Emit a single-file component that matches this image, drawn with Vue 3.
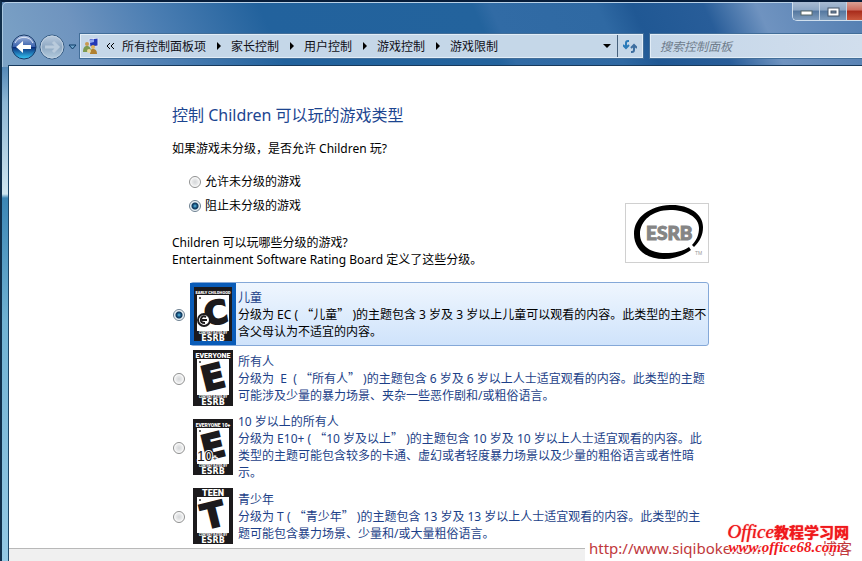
<script setup>
import { ref } from "vue";

const crumbs = ["所有控制面板项", "家长控制", "用户控制", "游戏控制", "游戏限制"];
const unrated = ref("block");
const rating = ref("EC");
const search = ref("");

const ratings = [
  {
    id: "EC",
    head: "EARLY CHILDHOOD",
    size: 4,
    letter: "C",
    name: "儿童",
    lines: [
      "分级为 EC ( “儿童” )的主题包含 3 岁及 3 岁以上儿童可以观看的内容。此类型的主题不",
      "含父母认为不适宜的内容。",
    ],
  },
  {
    id: "E",
    head: "EVERYONE",
    size: 7,
    letter: "E",
    name: "所有人",
    lines: [
      "分级为  E  ( “所有人” )的主题包含 6 岁及 6 岁以上人士适宜观看的内容。此类型的主题",
      "可能涉及少量的暴力场景、夹杂一些恶作剧和/或粗俗语言。",
    ],
  },
  {
    id: "E10",
    head: "EVERYONE 10+",
    size: 5,
    letter: "E",
    name: "10 岁以上的所有人",
    lines: [
      "分级为 E10+ ( “10 岁及以上” )的主题包含 10 岁及 10 岁以上人士适宜观看的内容。此",
      "类型的主题可能包含较多的卡通、虚幻或者轻度暴力场景以及少量的粗俗语言或者性暗",
      "示。",
    ],
  },
  {
    id: "T",
    head: "TEEN",
    size: 9,
    letter: "T",
    name: "青少年",
    lines: [
      "分级为 T ( “青少年” )的主题包含 13 岁及 13 岁以上人士适宜观看的内容。此类型的主",
      "题可能包含暴力场景、少量和/或大量粗俗语言。",
    ],
  },
];

// curly quotes are set full width, so they get their own pieces
const pieces = (line) => line.split(/([“”])/);
const isQuote = (piece) => piece === "“" || piece === "”";
</script>

<template>
  <div class="window">
    <div class="titlebar">
      <div class="winButtons">
        <button aria-label="最小化">
          <svg width="13" height="8"><rect x="1" y="3" width="11" height="4" fill="#fff" stroke="#566" /></svg>
        </button>
        <button aria-label="最大化">
          <svg width="13" height="10">
            <rect x="1" y="1" width="11" height="8" fill="#fff" stroke="#455468" />
            <rect x="4" y="4" width="5" height="2" fill="#7188a5" stroke="#455468" />
          </svg>
        </button>
        <button class="close" aria-label="关闭"></button>
      </div>
    </div>

    <div class="nav">
      <div class="travel">
        <button aria-label="后退">
          <svg width="26" height="26" viewBox="0 0 26 26">
            <defs>
              <linearGradient id="back" x2="0" y2="1">
                <stop offset="0" stop-color="#a9bce0" />
                <stop offset=".48" stop-color="#3b62ad" />
                <stop offset=".52" stop-color="#0b2f7c" />
                <stop offset="1" stop-color="#37c8f5" />
              </linearGradient>
            </defs>
            <circle cx="13" cy="13" r="12" fill="url(#back)" stroke="#173b69" />
            <path d="M4 9a10 10 0 0 1 18 0" fill="none" stroke="#dce6f5" />
            <path d="M5 13l7-6v4h8v4h-8v4z" fill="#fff" />
          </svg>
        </button>
        <button aria-label="前进">
          <svg width="26" height="26" viewBox="0 0 26 26">
            <defs>
              <linearGradient id="forward" x2="0" y2="1">
                <stop offset="0" stop-color="#bccde0" />
                <stop offset=".5" stop-color="#8ea8c2" />
                <stop offset="1" stop-color="#b5cddf" />
              </linearGradient>
            </defs>
            <circle cx="13" cy="13" r="12" fill="url(#forward)" stroke="#365c84" />
            <circle cx="13" cy="13" r="11" fill="none" stroke="#c2d2e2" />
            <path d="M6 13h13M14 8l5 5-5 5" fill="none" stroke="#b9cbdc" stroke-width="3" />
          </svg>
        </button>
        <button class="recent" aria-label="最近浏览的页面">
          <svg width="9" height="6"><path d="M1 1h7L4.500 5z" fill="#6ea3cb" stroke="#0d3c68" /></svg>
        </button>
      </div>

      <div class="address">
        <svg class="family" width="16" height="16" viewBox="0 0 16 16">
          <path d="M6 1l9-1v8l-8 1z" fill="#2338b5" stroke="#dfe6f5" />
          <path d="M7 2l4-1v3l-4 1z" fill="#8fa6f0" />
          <circle cx="4" cy="6" r="2" fill="#c99a4e" />
          <path d="M0 14c0-5 2-6 4-6s4 1 4 6z" fill="#7d9a50" />
          <circle cx="10" cy="9" r="2" fill="#e0b45c" />
          <path d="M7 16c0-4 1-5 3-5s4 1 4 5z" fill="#b08030" />
          <circle cx="6" cy="13" r="2" fill="#e8d9a0" />
        </svg>
        <svg class="more" width="8" height="7"><path d="M4 0L1 3l3 3M8 0L5 3l3 3" fill="none" stroke="#000" /></svg>
        <template v-for="(crumb, i) in crumbs" :key="crumb">
          <svg v-if="i > 0" class="arrow" width="25" height="8"><path d="M11 0v8l4-4z" /></svg>
          <a href="#">{{ crumb }}</a>
        </template>
        <button class="drop" aria-label="以前的位置">
          <svg width="8" height="4"><path d="M0 0h8L4 4z" /></svg>
        </button>
        <button class="refresh" aria-label="刷新">
          <svg width="14" height="13" viewBox="0 0 14 13">
            <path d="M6 1H5q-2 0-2 2v4M0 5l3 3 3-3" fill="none" stroke="#2b7bb9" stroke-width="2" />
            <path d="M8 12h1q2 0 2-2V6M8 8l3-3 3 3" fill="none" stroke="#3f6fa0" stroke-width="2" />
          </svg>
        </button>
      </div>

      <input v-model="search" class="search" placeholder="搜索控制面板" aria-label="搜索控制面板" />
    </div>

    <div class="client">
      <div class="content">
        <div class="intro">
          <div>
            <h1>控制 Children 可以玩的游戏类型</h1>
            <p>如果游戏未分级，是否允许 Children 玩?</p>
            <div class="choices">
              <label><input v-model="unrated" type="radio" value="allow" name="unrated" />允许未分级的游戏</label>
              <label><input v-model="unrated" type="radio" value="block" name="unrated" />阻止未分级的游戏</label>
            </div>
            <p>
              Children 可以玩哪些分级的游戏?<br />
              Entertainment Software Rating Board 定义了这些分级。
            </p>
          </div>
          <svg class="esrb" width="84" height="60" viewBox="0 0 84 60">
            <path
              fill-rule="evenodd"
              d="M45 2C62 1 78 10 78 24C78 32 75 38 69 44L67 42C72 37 74 31 74 25C74 14 61 7 45 7C27 7 15 18 15 31C15 43 26 50 40 50C50 50 58 48 64 44L66 47C59 52 50 56 39 56C22 56 9 47 9 31C9 14 25 3 45 2Z"
            />
            <text x="21" y="37" class="logoText">ESRB</text>
            <text x="70" y="52" class="tm">TM</text>
          </svg>
        </div>

        <label v-for="r in ratings" :key="r.id" class="rating" :class="{ selected: rating === r.id }">
          <input v-model="rating" type="radio" :value="r.id" name="rating" />
          <div class="card">
            <svg class="badge" width="40" height="56" viewBox="0 0 40 56">
              <rect width="40" height="56" fill="#1c1a1c" />
              <rect x="4" y="9" width="32" height="36" fill="#fff" />
              <text x="20" y="8" class="badgeText" :font-size="r.size">{{ r.head }}</text>
              <circle cx="7" cy="12" r="1" fill="#333" />
              <g v-if="r.id === 'EC'">
                <text x="23" y="38" class="letter" font-size="32" transform="rotate(-10 23 27)">C</text>
                <circle cx="11" cy="34" r="6" fill="#fff" stroke="#1c1a1c" stroke-width="2" />
                <path d="M13 31q-4-2-5 2t4 4M9 34h5" fill="none" stroke="#1c1a1c" stroke-width="2" />
              </g>
              <text v-else x="20" y="39" class="letter" font-size="34" transform="rotate(-14 20 27)">{{ r.letter }}</text>
              <text v-if="r.id === 'E10'" x="4" y="42" class="ten">10<tspan font-size="8">+</tspan></text>
              <text x="20" y="48" class="badgeText" font-size="3">CONTENT RATED BY</text>
              <text x="20" y="55" class="badgeText wide" font-size="8">ESRB</text>
            </svg>
            <div class="text">
              <div class="name">{{ r.name }}</div>
              <div v-for="line in r.lines" :key="line" class="line"><span v-for="(piece, i) in pieces(line)" :key="i" :class="{ quote: isQuote(piece) }">{{ piece }}</span></div>
            </div>
          </div>
        </label>
      </div>
      <div class="footer"></div>
    </div>

    <div class="mark">
      <div class="blog"><span>http://www.siqiboke.com</span><span>博客</span></div>
      <div class="site">Office<b>教程学习网</b></div>
      <div class="url">www.office68.com</div>
    </div>
  </div>
</template>

<style>
body {
  margin: 0;
}
</style>

<style scoped>
* {
  box-sizing: border-box;
}
.window {
  position: relative;
  display: flex;
  flex-direction: column;
  height: 100vh;
  overflow: hidden;
  padding-left: 7px;
  border-top: 2px solid #071d3a;
  border-left: 2px solid #102f4b;
  background: linear-gradient(#5d86b4 0, #4c82b3 60px, #8db6d4 100px, #cfe6f0 192px, #3c86b5 196px, #70b2d3 320px, #94c8e4 100%);
  font: 12px/17px "Noto Sans", "Noto Sans CJK SC", sans-serif;
}
.titlebar,
.nav {
  margin-left: -7px;
  padding-left: 7px;
}
.window::before {
  content: "";
  position: absolute;
  top: 0;
  left: 0;
  right: 0;
  height: 64px;
  border-top: 1px solid #b8d1e8;
  border-left: 1px solid #a9c8e0;
  border-radius: 5px 0 0 0;
  background: linear-gradient(65deg, #7ca3c6 0, #6f94bf 10%, #4a7db2 20%, #22629d 32%, #23639d 56%, #316ba5 58%, #2f69a3 70%, #205894 74%, #285d99 82%, #6f93c0 88%, #537eb1 100%);
}
.titlebar {
  position: relative;
  display: flex;
  justify-content: flex-end;
  height: 32px;
}
button {
  display: flex;
  align-items: center;
  justify-content: center;
  padding: 0;
  border: 0;
  background: none;
}
.winButtons {
  display: flex;
  height: 19px;
  border: 1px solid #d0dfed;
  border-top: 0;
  border-right: 0;
  border-radius: 0 0 0 5px;
  overflow: hidden;
}
.winButtons button {
  width: 27px;
  padding-top: 2px;
  border-right: 1px solid #c5d4e4;
  background: linear-gradient(#a9bcd3 0, #8ba5c3 45%, #54779f 50%, #7f9dbd 100%);
}
.winButtons .close {
  width: 15px;
  border: 0;
  background: linear-gradient(#d9a094 0, #cc6b5d 45%, #a82b1b 50%, #c9583d 100%);
}
.nav {
  position: relative;
  display: flex;
  align-items: flex-start;
  height: 31px;
}
.travel {
  display: flex;
  gap: 2px;
  padding: 0 2px;
  width: 71px;
}
.recent {
  width: 11px;
  height: 26px;
}
.address {
  display: flex;
  align-items: center;
  flex: 1;
  height: 24px;
  border: 1px solid #e2edf7;
  outline: 1px solid #426e99;
  background: #c5d7e8;
}
.family {
  margin: 0 7px 0 2px;
}
.more {
  margin-right: 8px;
}
.address a {
  color: #101018;
  text-decoration: none;
}
.drop {
  width: 20px;
  height: 22px;
  margin-left: auto;
}
.refresh {
  width: 25px;
  height: 22px;
  border-left: 1px solid #46617d;
}
.search {
  width: 212px;
  height: 24px;
  margin-left: 7px;
  padding: 0 9px;
  border: 1px solid #e2edf7;
  border-right: 0;
  border-radius: 0;
  outline: 1px solid #426e99;
  background: linear-gradient(90deg, #c4d6e8, #d1deed);
  font: italic 12px/17px "Noto Sans", "Noto Sans CJK SC", sans-serif;
}
.search::placeholder {
  color: #6f7d8c;
}
.client {
  position: relative;
  display: flex;
  flex-direction: column;
  flex: 1;
  border-top: 1px solid #17395c;
  border-left: 1px solid #1b4567;
  margin-left: -1px;
  background: #fff;
}
.content {
  max-width: 537px;
  margin-left: 163px;
}
.intro {
  display: flex;
  justify-content: space-between;
  height: 216px;
}
h1 {
  margin: 37px 0 0;
  color: #1c4590;
  font-size: 16px;
  font-weight: 400;
  line-height: 24px;
}
p {
  margin: 13px 0 0;
  color: #000;
}
.choices {
  margin: 12px 0 17px 17px;
}
.choices label {
  display: flex;
  align-items: center;
  gap: 4px;
  height: 24px;
}
input[type="radio"] {
  appearance: none;
  flex: none;
  width: 12px;
  height: 12px;
  margin: 2px 0 0;
  border: 1px solid #8e8f8f;
  border-radius: 50%;
  background: radial-gradient(circle, #d4d6d8 0, #e8e9ea 3px, #fff 5px);
}
input[type="radio"]:checked {
  border-color: #6c7f90;
  background: radial-gradient(circle at 50% 50%, #5dc0e6 0, #164f7c 2px, #12395c 3px, #dce8f0 4px, #fff 5px);
}
.esrb {
  flex: none;
  align-self: flex-end;
  margin-bottom: 19px;
  outline: 1px solid #d0d0d0;
  outline-offset: -1px;
}
.logoText {
  fill: #858585;
  stroke: #858585;
  font: 900 19px Lato, sans-serif;
}
.tm {
  fill: #999;
  font: 5px "Liberation Sans", sans-serif;
}
.rating {
  display: flex;
  align-items: center;
  gap: 5px;
  padding-left: 1px;
  color: #1c3f88;
}
.card {
  display: flex;
  align-items: center;
  flex: 1;
  min-height: 64px;
  padding: 2px 0;
  border: 1px solid transparent;
  border-radius: 3px;
}
.badge {
  flex: none;
  margin: 0 5px 0 2px;
}
.text {
  min-width: 0;
}
.line {
  white-space: pre;
}
.quote {
  font-family: "Noto Sans CJK SC", sans-serif;
  line-height: 1;
}
.selected .card {
  border-color: #84a8d8;
  background: linear-gradient(#eff6fe, #cfe3fb);
}
.selected .line {
  color: #000;
}
.selected .badge {
  outline: 4px solid #0a5cb8;
  outline-offset: -1px;
}
.badgeText {
  fill: #fff;
  font-family: Roboto, sans-serif;
  font-weight: 900;
  text-anchor: middle;
}
.wide {
  font-family: "DejaVu Sans", sans-serif;
}
.letter {
  fill: #1c1a1c;
  stroke: #1c1a1c;
  stroke-width: 2;
  font-family: "DejaVu Sans", sans-serif;
  font-weight: 900;
  text-anchor: middle;
}
.ten {
  fill: #1c1a1c;
  stroke: #fff;
  stroke-width: 2;
  paint-order: stroke;
  font: 14px "Liberation Sans", sans-serif;
}
.footer {
  flex: 1;
  border-top: 1px solid #b8b8b8;
  background: #f0f0f0;
}
.mark {
  position: absolute;
  right: 0;
  bottom: 0;
  width: 277px;
  height: 22px;
  background: #fff;
  color: #f0181c;
  white-space: nowrap;
}
.blog {
  position: absolute;
  left: 4px;
  right: 10px;
  top: -1px;
  display: flex;
  justify-content: space-between;
  color: #c0383c;
  font-size: 15px;
  line-height: 20px;
}
.site,
.url {
  position: absolute;
  right: 13px;
  top: -17px;
  font: italic 19px/20px "Liberation Serif", "Noto Sans CJK SC", serif;
  text-shadow: 0 0 1px #f0181c;
}
.url {
  right: 21px;
  top: -1px;
  font-size: 15px;
  font-weight: bold;
  line-height: 18px;
  text-shadow: 0 0 2px #fff, 1px 1px 1px #fff, -1px -1px 1px #fff;
}
.site b {
  font-size: 15px;
  font-style: normal;
}
</style>
